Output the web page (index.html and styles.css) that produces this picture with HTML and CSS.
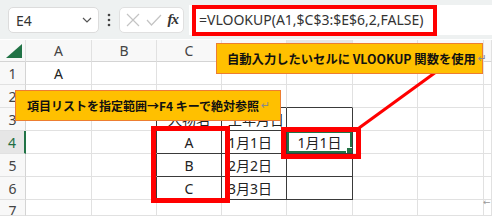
FILE: index.html
```html
<!DOCTYPE html>
<html lang="ja">
<head>
<meta charset="utf-8">
<link rel="stylesheet" href="styles.css">
</head>
<body>
<div class="toolbar">
  <div class="namebox">
    <span class="nb-text">E4</span>
    <svg class="chev" width="10" height="6" viewBox="0 0 10 6"><path d="M1 1 L5 5 L9 1" fill="none" stroke="#555" stroke-width="1.2"/></svg>
  </div>
  <div class="dots"><svg width="4" height="14" viewBox="0 0 4 14"><circle cx="2" cy="2" r="1.3" fill="#444"/><circle cx="2" cy="7" r="1.3" fill="#444"/><circle cx="2" cy="12" r="1.3" fill="#444"/></svg></div>
  <div class="fxbox">
    <svg width="14" height="14" viewBox="0 0 14 14"><path d="M1 1 L13 13 M13 1 L1 13" stroke="#c4c4c4" stroke-width="1.2"/></svg>
    <svg width="16" height="12" viewBox="0 0 16 12"><path d="M1 6 L5.5 11 L15 1" fill="none" stroke="#c4c4c4" stroke-width="1.2"/></svg>
    <span class="fx">fx</span>
  </div>
  <div class="formula">=VLOOKUP(A1,$C$3:$E$6,2,FALSE)</div>
</div>

<div class="sheet">
  <div class="c hd corner"><svg width="16" height="14" viewBox="0 0 16 14"><path d="M16 0 L16 14 L0 14 Z" fill="#217346"/></svg></div>
  <div class="c hd">A</div><div class="c hd">B</div><div class="c hd">C</div><div class="c hd">D</div><div class="c hd sel-col">E</div><div class="c hd">F</div><div class="c hd">G</div><div class="c hd"></div>

  <div class="c rh">1</div><div class="c ctr">A</div><div class="c"></div><div class="c"></div><div class="c"></div><div class="c"></div><div class="c"></div><div class="c"></div><div class="c"></div>

  <div class="c rh">2</div><div class="c"></div><div class="c"></div><div class="c tb"></div><div class="c tb"></div><div class="c tb"></div><div class="c"></div><div class="c"></div><div class="c"></div>

  <div class="c rh">3</div><div class="c"></div><div class="c tr"></div><div class="c t ctr">人物名</div><div class="c t lft">生年月日</div><div class="c t"></div><div class="c"></div><div class="c"></div><div class="c"></div>

  <div class="c rh sel-row">4</div><div class="c"></div><div class="c tr"></div><div class="c t ctr">A</div><div class="c t lft">1月1日</div><div class="c t ctr active">1月1日</div><div class="c"></div><div class="c"></div><div class="c"></div>

  <div class="c rh">5</div><div class="c"></div><div class="c tr"></div><div class="c t ctr">B</div><div class="c t lft">2月2日</div><div class="c t"></div><div class="c"></div><div class="c"></div><div class="c"></div>

  <div class="c rh">6</div><div class="c"></div><div class="c tr"></div><div class="c t ctr">C</div><div class="c t lft">3月3日</div><div class="c t"></div><div class="c"></div><div class="c"></div><div class="c"></div>

  <div class="c rh last">7</div><div class="c"></div><div class="c"></div><div class="c"></div><div class="c"></div><div class="c"></div><div class="c"></div><div class="c"></div><div class="c"></div>
</div>

<div class="redbox rb-formula"></div>
<div class="redbox rb-list"></div>
<div class="redbox rb-e4"></div>
<svg class="pointer" width="492" height="216" viewBox="0 0 492 216"><line x1="359" y1="128" x2="436" y2="72" stroke="#ff0000" stroke-width="3"/></svg>

<div class="callout co-1">自動入力したいセルに VLOOKUP 関数を使用<span class="ret">↵</span></div>
<div class="callout co-2">項目リストを指定範囲→F4 キーで絶対参照<span class="ret">↵</span></div>
<span class="stray">←</span>
</body>
</html>
```

FILE: styles.css
```css
html, body {
  margin: 0;
  padding: 0;
  background: #ffffff;
  width: 492px;
  height: 216px;
  overflow: hidden;
  position: relative;
  font-family: "Noto Sans", "Noto Sans CJK JP", sans-serif;
}

.toolbar {
  height: 39px;
  background: #eef1f1;
  display: flex;
  align-items: center;
  padding: 0 0 0 8px;
  box-sizing: border-box;
}

.namebox {
  width: 91px;
  height: 26px;
  background: #fff;
  border: 1px solid #dcdcdc;
  border-radius: 5px;
  display: flex;
  align-items: center;
  justify-content: space-between;
  padding: 0 6px 0 7px;
  box-sizing: border-box;
  font-size: 14px;
  color: #333;
}

.nb-text { line-height: 1; padding-top: 2px; }

.dots {
  width: 20px;
  display: flex;
  justify-content: center;
  align-items: center;
}

.fxbox {
  width: 65px;
  height: 26px;
  background: #fff;
  border: 1px solid #e0e0e0;
  border-radius: 5px;
  box-sizing: border-box;
  display: flex;
  align-items: center;
  justify-content: space-between;
  padding: 0 5px 0 6px;
}

.fx {
  font-family: "Liberation Serif", serif;
  font-style: italic;
  font-weight: bold;
  font-size: 15px;
  color: #333;
  letter-spacing: -1px;
}

.formula {
  flex: 1;
  height: 30px;
  margin-left: 5px;
  background: #fff;
  display: flex;
  align-items: center;
  padding-left: 10px;
  font-size: 14px;
  color: #333;
  white-space: nowrap;
}

.sheet {
  margin-top: 1px;
  display: grid;
  grid-template-columns: 26px 66px 65px 65px 65px 66px 65px 66px 8px;
  grid-template-rows: 22px repeat(6, 23px) 16px;
}

.c {
  box-sizing: border-box;
  border-right: 1px solid #e1e1e1;
  border-bottom: 1px solid #e1e1e1;
  font-size: 14px;
  color: #222;
  display: flex;
  align-items: center;
  white-space: nowrap;
  overflow: hidden;
  position: relative;
}

.hd {
  background: #f8f8f8;
  color: #444;
  justify-content: center;
  border-bottom-color: #d4d4d4;
}

.corner {
  justify-content: flex-end;
  align-items: flex-end;
  padding: 0 3px 3px 0;
}

.rh {
  background: #f8f8f8;
  color: #444;
  justify-content: center;
  border-right-color: #d4d4d4;
}

.last {
  align-items: flex-start;
  line-height: 1;
  padding-top: 4px;
}

.sel-row {
  background: #e6e6e6;
  color: #1e6e42;
  border-right: 2px solid #217346;
}

.sel-col {
  background: #e6e6e6;
  color: #1e6e42;
  border-bottom: 2px solid #217346;
}

.ctr { justify-content: center; }
.lft { padding-left: 6px; }

.t {
  border-right-color: #3a3a3a;
  border-bottom-color: #3a3a3a;
}

.tb { border-bottom-color: #3a3a3a; }
.tr { border-right-color: #3a3a3a; }

.active {
  box-shadow: inset 0 0 0 2px #217346;
}

.active::after {
  content: "";
  position: absolute;
  right: -1px;
  bottom: -1px;
  width: 5px;
  height: 5px;
  background: #217346;
  border: 1px solid #fff;
}

.redbox {
  position: absolute;
  border: 5px solid #ff0000;
  box-sizing: border-box;
}

.rb-formula { left: 192px; top: 5px; width: 245px; height: 31px; border-width: 4px; }
.rb-list { left: 151px; top: 126px; width: 79px; height: 77px; }
.rb-e4 { left: 281px; top: 127px; width: 80px; height: 32px; }

.pointer {
  position: absolute;
  left: 0;
  top: 0;
}

.callout {
  position: absolute;
  background: #ffc000;
  border: 1.5px solid #ed7d31;
  box-sizing: border-box;
  display: flex;
  align-items: center;
  font-family: "Noto Sans CJK JP", sans-serif;
  font-weight: bold;
  font-size: 12.3px;
  color: #111;
  white-space: nowrap;
  padding-left: 10px;
}

.co-1 { left: 216px; top: 43px; width: 267px; height: 31px; }
.co-2 { left: 15px; top: 90px; width: 266px; height: 31px; padding-left: 11px; font-size: 12px; }

.ret {
  font-family: "DejaVu Sans", sans-serif;
  font-weight: normal;
  color: #8a8a8a;
  font-size: 11px;
  margin-left: 2px;
}

.stray {
  position: absolute;
  left: 483px;
  top: 198px;
  font-family: "DejaVu Sans", sans-serif;
  font-size: 9px;
  line-height: 1;
  color: #999;
}
```
